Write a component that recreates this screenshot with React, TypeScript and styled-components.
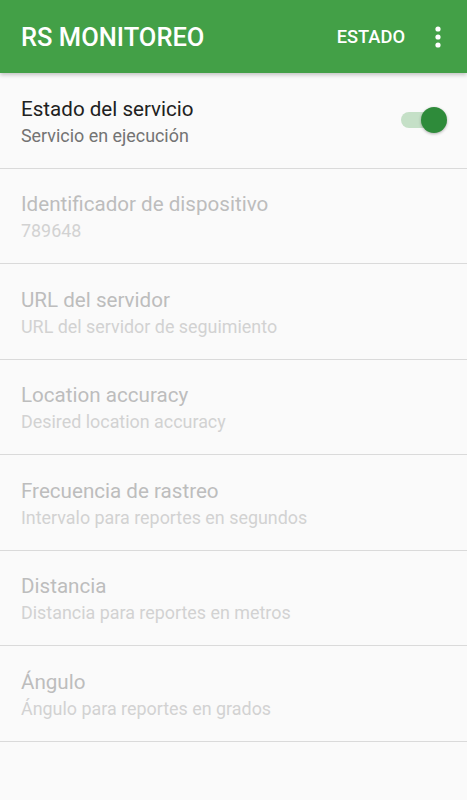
import styled, { createGlobalStyle } from "styled-components";

const GlobalStyle = createGlobalStyle`
  html, body {
    margin: 0;
    padding: 0;
    background: #fafafa;
    font-family: Roboto, "Noto Sans", sans-serif;
  }
`;

const Screen = styled.div`
  width: 467px;
  min-height: 800px;
  background: #fafafa;
`;

const AppBar = styled.header`
  height: 73px;
  background: #43a047;
  display: flex;
  align-items: center;
  padding: 0 26px 0 21px;
  box-shadow: 0 2px 4px rgba(0, 0, 0, 0.22);
  position: relative;
  z-index: 1;
`;

const AppTitle = styled.h1`
  flex: 1;
  margin: 0;
  color: #fff;
  font-size: 25.5px;
  font-weight: 500;
`;

const Action = styled.span`
  color: #fff;
  font-size: 18.3px;
  font-weight: 500;
  margin-right: 30px;
`;

const Kebab = styled.svg`
  width: 6px;
  height: 22px;
  fill: #fff;
`;

const List = styled.div`
  display: flex;
  flex-direction: column;
`;

const Row = styled.div`
  height: 95.5px;
  box-sizing: border-box;
  border-bottom: 1px solid #dadada;
  display: flex;
  align-items: center;
  padding: 0 21px;
`;

const Texts = styled.div`
  flex: 1;
  display: flex;
  flex-direction: column;
  gap: 4px;
  padding-top: 3px;
`;

const Title = styled.div<{ $disabled?: boolean }>`
  font-size: 20.6px;
  line-height: 24px;
  color: ${(p) => (p.$disabled ? "#bdbdbd" : "#212121")};
`;

const Summary = styled.div<{ $disabled?: boolean }>`
  font-size: 17.9px;
  line-height: 22px;
  color: ${(p) => (p.$disabled ? "#d2d2d2" : "#737373")};
`;

const Switch = styled.div`
  position: relative;
  width: 46px;
  height: 26px;
  margin-right: -1px;
  display: flex;
  align-items: center;
`;

const Track = styled.div`
  width: 40px;
  height: 16px;
  border-radius: 8px;
  background: #c5e0c7;
`;

const Thumb = styled.div`
  position: absolute;
  right: 0;
  top: 0;
  width: 26px;
  height: 26px;
  border-radius: 50%;
  background: #2e8b3a;
  box-shadow: 0 1px 3px rgba(0, 0, 0, 0.3);
`;

const settings = [
  { title: "Identificador de dispositivo", summary: "789648" },
  { title: "URL del servidor", summary: "URL del servidor de seguimiento" },
  { title: "Location accuracy", summary: "Desired location accuracy" },
  { title: "Frecuencia de rastreo", summary: "Intervalo para reportes en segundos" },
  { title: "Distancia", summary: "Distancia para reportes en metros" },
  { title: "Ángulo", summary: "Ángulo para reportes en grados" },
];

const App = () => (
  <>
    <GlobalStyle />
    <Screen>
      <AppBar>
        <AppTitle>RS MONITOREO</AppTitle>
        <Action>ESTADO</Action>
        <Kebab viewBox="0 0 6 22">
          <circle cx="3" cy="3" r="2.6" />
          <circle cx="3" cy="11" r="2.6" />
          <circle cx="3" cy="19" r="2.6" />
        </Kebab>
      </AppBar>
      <List>
        <Row>
          <Texts>
            <Title>Estado del servicio</Title>
            <Summary>Servicio en ejecución</Summary>
          </Texts>
          <Switch>
            <Track />
            <Thumb />
          </Switch>
        </Row>
        {settings.map((s) => (
          <Row key={s.title}>
            <Texts>
              <Title $disabled>{s.title}</Title>
              <Summary $disabled>{s.summary}</Summary>
            </Texts>
          </Row>
        ))}
      </List>
    </Screen>
  </>
);

export default App;
